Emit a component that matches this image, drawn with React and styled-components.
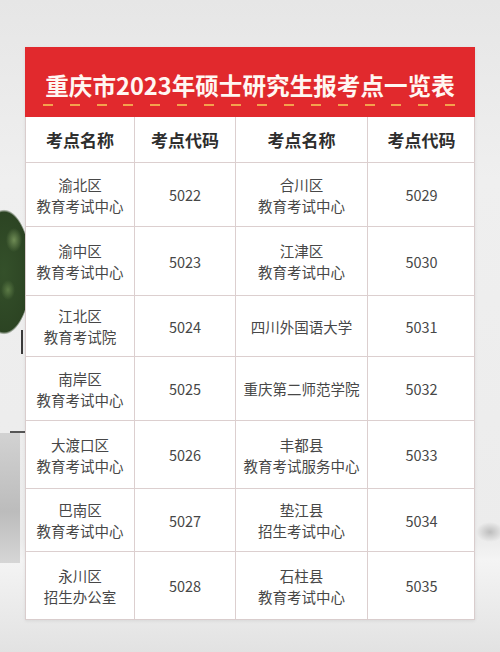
import React from "react";
import styled, { createGlobalStyle } from "styled-components";

const GlobalStyle = createGlobalStyle`
  html, body {
    margin: 0;
    padding: 0;
  }
  body {
    font-family: "Noto Sans CJK SC", "Noto Sans", sans-serif;
  }
`;

const Page = styled.div`
  width: 500px;
  height: 652px;
  box-sizing: border-box;
  padding: 47px 25px 0;
  overflow: hidden;
  background:
    radial-gradient(ellipse 8px 12px at 14px 240px, #6f8c55 0%, rgba(111, 140, 85, 0) 100%),
    radial-gradient(ellipse 7px 10px at 8px 290px, #5b7a45 0%, rgba(91, 122, 69, 0) 100%),
    radial-gradient(ellipse 30px 68px at 4px 272px, #34502a 0%, #2c4423 88%, rgba(44, 68, 35, 0) 92%),
    linear-gradient(90deg, transparent 21px, #3a3a3a 21px, #3a3a3a 23px, transparent 23px) 0 330px / 30px 24px no-repeat,
    linear-gradient(90deg, transparent 10px, #555 10px) 0 431px / 30px 2px no-repeat,
    linear-gradient(180deg, #d2d2d2 0%, #bcbcbc 60%, #d6d6d6 100%) 0 433px / 20px 130px no-repeat,
    radial-gradient(ellipse 14px 10px at 490px 532px, #bdbdbd 0%, rgba(189, 189, 189, 0) 100%),
    linear-gradient(180deg, #e6e6e6 0px, #efefef 180px, #ececec 540px, #f4f4f4 560px, #e2e2e2 652px);
`;

const Card = styled.div`
  width: 450px;
  background: #ffffff;
  border: 1px solid #d9cdcd;
  border-top: none;
  box-sizing: border-box;
  box-shadow: 0 1px 3px rgba(0, 0, 0, 0.08);
`;

const Banner = styled.div`
  height: 70px;
  margin: 0 -1px;
  background: #e1292d;
  display: flex;
  flex-direction: column;
  align-items: center;
  padding-top: 22px;
  box-sizing: border-box;
`;

const Title = styled.h1`
  margin: 0;
  font-size: 23.6px;
  line-height: 32px;
  font-weight: 700;
  color: #fff7f2;
  white-space: nowrap;
`;

const Dashes = styled.div`
  width: 414px;
  height: 2px;
  margin-top: 3px;
  background: repeating-linear-gradient(
    90deg,
    #f4a24e 0px,
    #f4a24e 10px,
    transparent 10px,
    transparent 26.8px
  );
`;

const Grid = styled.div`
  display: grid;
  grid-template-columns: 109px 101px 132px 107px;
`;

const Cell = styled.div`
  height: ${(p) => p.$h}px;
  box-sizing: border-box;
  display: flex;
  flex-direction: column;
  align-items: center;
  justify-content: center;
  text-align: center;
  border-bottom: ${(p) => (p.$last ? "none" : "1px solid #dccfcf")};
  border-right: ${(p) => (p.$end ? "none" : "1px solid #dccfcf")};
  color: ${(p) => (p.$head ? "#2e2e2e" : "#474747")};
  font-size: ${(p) => (p.$head ? "17px" : "14.5px")};
  font-weight: ${(p) => (p.$head ? 700 : 400)};
  line-height: 21px;
  white-space: nowrap;
`;

const headers = ["考点名称", "考点代码", "考点名称", "考点代码"];

const rows = [
  { h: 64, a: ["渝北区", "教育考试中心"], ac: "5022", b: ["合川区", "教育考试中心"], bc: "5029" },
  { h: 69, a: ["渝中区", "教育考试中心"], ac: "5023", b: ["江津区", "教育考试中心"], bc: "5030" },
  { h: 61, a: ["江北区", "教育考试院"], ac: "5024", b: ["四川外国语大学"], bc: "5031" },
  { h: 64, a: ["南岸区", "教育考试中心"], ac: "5025", b: ["重庆第二师范学院"], bc: "5032" },
  { h: 68, a: ["大渡口区", "教育考试中心"], ac: "5026", b: ["丰都县", "教育考试服务中心"], bc: "5033" },
  { h: 63, a: ["巴南区", "教育考试中心"], ac: "5027", b: ["垫江县", "招生考试中心"], bc: "5034" },
  { h: 67, a: ["永川区", "招生办公室"], ac: "5028", b: ["石柱县", "教育考试中心"], bc: "5035" },
];

const Lines = ({ items }) => items.map((t) => <span key={t}>{t}</span>);

export default function App() {
  return (
    <>
      <GlobalStyle />
      <Page>
        <Card>
          <Banner>
            <Title>重庆市2023年硕士研究生报考点一览表</Title>
            <Dashes />
          </Banner>
          <Grid>
            {headers.map((h, i) => (
              <Cell key={i} $h={46} $head $end={i === 3}>
                {h}
              </Cell>
            ))}
            {rows.map((r, i) => {
              const last = i === rows.length - 1;
              return (
                <React.Fragment key={r.ac}>
                  <Cell $h={r.h} $last={last}>
                    <Lines items={r.a} />
                  </Cell>
                  <Cell $h={r.h} $last={last}>
                    {r.ac}
                  </Cell>
                  <Cell $h={r.h} $last={last}>
                    <Lines items={r.b} />
                  </Cell>
                  <Cell $h={r.h} $last={last} $end>
                    {r.bc}
                  </Cell>
                </React.Fragment>
              );
            })}
          </Grid>
        </Card>
      </Page>
    </>
  );
}
